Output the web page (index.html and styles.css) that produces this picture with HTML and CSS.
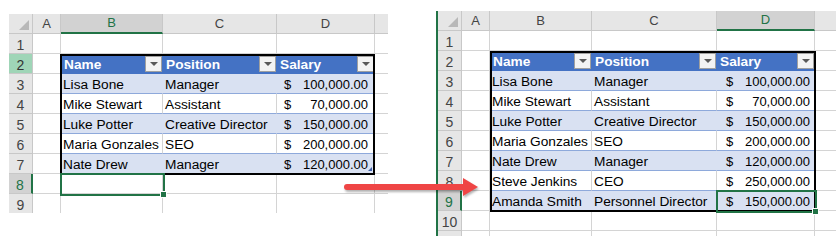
FILE: index.html
```html
<!DOCTYPE html>
<html lang="en">

<head>
    <meta charset="UTF-8">
    <meta name="viewport" content="width=device-width, initial-scale=1.0">
    <title>Add rows to a table</title>
    <link rel="stylesheet" href="styles.css">
</head>

<body>
    <div class="page">
        <!-- Sheet before the new rows -->
        <div class="sheet sheet-before">
            <div class="corner"></div>
            <div class="col-head">A</div>
            <div class="col-head sel">B</div>
            <div class="col-head">C</div>
            <div class="col-head">D</div>
            <div class="col-head"></div>

            <div class="row-head">1</div>
            <div class="cell"></div>
            <div class="cell"></div>
            <div class="cell"></div>
            <div class="cell"></div>
            <div class="cell"></div>

            <div class="row-head mark">2</div>
            <div class="cell"></div>
            <div class="cell"></div>

            <div class="row-head">3</div>
            <div class="cell"></div>
            <div class="cell"></div>

            <div class="row-head">4</div>
            <div class="cell"></div>
            <div class="cell"></div>

            <div class="row-head">5</div>
            <div class="cell"></div>
            <div class="cell"></div>

            <div class="row-head">6</div>
            <div class="cell"></div>
            <div class="cell"></div>

            <div class="row-head">7</div>
            <div class="cell"></div>
            <div class="cell"></div>

            <div class="row-head sel">8</div>
            <div class="cell"></div>
            <div class="cell active"></div>
            <div class="cell"></div>
            <div class="cell"></div>
            <div class="cell"></div>

            <div class="row-head">9</div>
            <div class="cell"></div>
            <div class="cell"></div>
            <div class="cell"></div>
            <div class="cell"></div>
            <div class="cell"></div>

            <div class="tbl">
                <div class="th"><span>Name</span><span class="drop"></span></div>
                <div class="th"><span>Position</span><span class="drop"></span></div>
                <div class="th"><span>Salary</span><span class="drop"></span></div>

                <div class="td band">Lisa Bone</div>
                <div class="td band">Manager</div>
                <div class="td band money"><span>$</span><span>100,000.00</span></div>

                <div class="td">Mike Stewart</div>
                <div class="td">Assistant</div>
                <div class="td money"><span>$</span><span>70,000.00</span></div>

                <div class="td band">Luke Potter</div>
                <div class="td band">Creative Director</div>
                <div class="td band money"><span>$</span><span>150,000.00</span></div>

                <div class="td">Maria Gonzales</div>
                <div class="td">SEO</div>
                <div class="td money"><span>$</span><span>200,000.00</span></div>

                <div class="td band">Nate Drew</div>
                <div class="td band">Manager</div>
                <div class="td band money resize"><span>$</span><span>120,000.00</span></div>
            </div>
        </div>

        <!-- Sheet after the new rows -->
        <div class="sheet sheet-after">
            <div class="corner"></div>
            <div class="col-head">A</div>
            <div class="col-head">B</div>
            <div class="col-head">C</div>
            <div class="col-head sel">D</div>
            <div class="col-head"></div>

            <div class="row-head">1</div>
            <div class="cell"></div>
            <div class="cell"></div>
            <div class="cell"></div>
            <div class="cell"></div>
            <div class="cell"></div>

            <div class="row-head">2</div>
            <div class="cell"></div>
            <div class="cell"></div>

            <div class="row-head">3</div>
            <div class="cell"></div>
            <div class="cell"></div>

            <div class="row-head">4</div>
            <div class="cell"></div>
            <div class="cell"></div>

            <div class="row-head">5</div>
            <div class="cell"></div>
            <div class="cell"></div>

            <div class="row-head">6</div>
            <div class="cell"></div>
            <div class="cell"></div>

            <div class="row-head">7</div>
            <div class="cell"></div>
            <div class="cell"></div>

            <div class="row-head">8</div>
            <div class="cell"></div>
            <div class="cell"></div>

            <div class="row-head sel">9</div>
            <div class="cell"></div>
            <div class="cell"></div>

            <div class="row-head">10</div>
            <div class="cell"></div>
            <div class="cell"></div>
            <div class="cell"></div>
            <div class="cell"></div>
            <div class="cell"></div>

            <!-- next row, only its top edge is in view -->
            <div class="row-head"></div>
            <div class="cell"></div>
            <div class="cell"></div>
            <div class="cell"></div>
            <div class="cell"></div>
            <div class="cell"></div>

            <div class="tbl">
                <div class="th"><span>Name</span><span class="drop"></span></div>
                <div class="th"><span>Position</span><span class="drop"></span></div>
                <div class="th"><span>Salary</span><span class="drop"></span></div>

                <div class="td band">Lisa Bone</div>
                <div class="td band">Manager</div>
                <div class="td band money"><span>$</span><span>100,000.00</span></div>

                <div class="td">Mike Stewart</div>
                <div class="td">Assistant</div>
                <div class="td money"><span>$</span><span>70,000.00</span></div>

                <div class="td band">Luke Potter</div>
                <div class="td band">Creative Director</div>
                <div class="td band money"><span>$</span><span>150,000.00</span></div>

                <div class="td">Maria Gonzales</div>
                <div class="td">SEO</div>
                <div class="td money"><span>$</span><span>200,000.00</span></div>

                <div class="td band">Nate Drew</div>
                <div class="td band">Manager</div>
                <div class="td band money"><span>$</span><span>120,000.00</span></div>

                <div class="td">Steve Jenkins</div>
                <div class="td">CEO</div>
                <div class="td money"><span>$</span><span>250,000.00</span></div>

                <div class="td band">Amanda Smith</div>
                <div class="td band">Personnel Director</div>
                <div class="td band money active"><span>$</span><span>150,000.00</span></div>
            </div>
        </div>

        <!-- Arrow between the two sheets -->
        <svg class="arrow" width="150" height="40" viewBox="0 0 150 40">
            <line x1="10" y1="17" x2="128" y2="17" stroke="#ef4545" stroke-width="6" stroke-linecap="round" />
            <polygon points="126,8 141,17 126,26" fill="#ef4545" />
        </svg>
    </div>
</body>

</html>
```

FILE: styles.css
```css
body {
    margin: 0;
    font-family: "Liberation Sans", Arial, sans-serif;
    font-size: 13.7px;
    color: #000;
    background-color: #fff;
}

.page {
    position: relative;
    display: flex;
    align-items: flex-start;
    width: 836px;
    height: 248px;
    padding-left: 9px;
    box-sizing: border-box;
    overflow: hidden;
}

/* Sheet grid */
.sheet {
    display: grid;
    grid-auto-rows: 20px;
    overflow: hidden;
    background-color: #fff;
    box-sizing: border-box;
}

.sheet-before {
    grid-template-columns: 24px 28px 102px 114px 98px 30px;
    width: 379px;
    height: 199px;
    margin-top: 14px;
}

.sheet-after {
    grid-template-columns: 24px 28px 102px 125px 98px 30px;
    width: 400px;
    height: 225px;
    margin-top: 11px;
    margin-left: 48px;
    border-left: 2px solid #217346;
}

.cell,
.corner,
.col-head,
.row-head,
.th,
.td {
    box-sizing: border-box;
    border-right: 1px solid #d4d4d4;
    border-bottom: 1px solid #d4d4d4;
    padding: 3px 0 0 2px;
    line-height: 16px;
    white-space: nowrap;
}

/* Headers */
.corner {
    position: relative;
    background-color: #e6e6e6;
    border-right-color: #c8c8c8;
    border-bottom-color: #c8c8c8;
}

.corner::after {
    content: '';
    position: absolute;
    right: 3px;
    bottom: 3px;
    border-style: solid;
    border-width: 0 0 10px 10px;
    border-color: transparent transparent #b8b8b8 transparent;
}

.col-head {
    background-color: #e6e6e6;
    border-right-color: #c8c8c8;
    border-bottom-color: #c8c8c8;
    padding: 0;
    font-size: 13px;
    line-height: 19px;
    text-align: center;
    color: #444;
}

.col-head.sel {
    background-color: #d2d2d2;
    color: #217346;
    border-bottom: 2px solid #217346;
    line-height: 18px;
}

.row-head {
    background-color: #e6e6e6;
    border-right-color: #c8c8c8;
    border-bottom-color: #c8c8c8;
    padding: 3px 0 0;
    font-size: 14px;
    text-align: center;
    color: #444;
}

.row-head.mark {
    background-color: #9fd5b7;
    color: #333;
}

.row-head.sel {
    background-color: #d2d2d2;
    color: #217346;
    border-right: 2px solid #217346;
}

/* Table */
.tbl {
    position: relative;
    display: grid;
    grid-auto-rows: 20px;
}

.sheet-before .tbl {
    grid-column: 3 / 6;
    grid-row: 3 / 9;
    grid-template-columns: 102px 114px 98px;
}

.sheet-after .tbl {
    grid-column: 3 / 6;
    grid-row: 3 / 11;
    grid-template-columns: 102px 125px 98px;
}

.tbl::after {
    content: '';
    position: absolute;
    top: 0;
    bottom: -1px;
    border: 2px solid #000;
    z-index: 1;
    pointer-events: none;
}

.sheet-before .tbl::after {
    left: -1px;
    right: 0;
}

.sheet-after .tbl::after {
    left: 0;
    right: -1px;
}

.th {
    display: flex;
    justify-content: space-between;
    align-items: flex-start;
    padding: 3px 0 0 3px;
    background-color: #4472c4;
    border-right-color: #4472c4;
    border-bottom-color: #4472c4;
    color: #fff;
    font-weight: bold;
}

.drop {
    position: relative;
    width: 17px;
    height: 16px;
    margin-top: -1px;
    box-sizing: border-box;
    background-color: #f3f3f3;
    border: 1px solid #a0a0a0;
}

.drop::after {
    content: '';
    position: absolute;
    left: 4px;
    top: 5px;
    border-left: 4px solid transparent;
    border-right: 4px solid transparent;
    border-top: 4px solid #595959;
}

.td {
    border-bottom-color: #8ea9db;
}

.td.band {
    background-color: #d9e1f2;
    border-right-color: #d9e1f2;
}

.money {
    display: flex;
    justify-content: space-between;
    font-size: 13px;
}

.sheet-before .money {
    padding-left: 7px;
    padding-right: 6px;
}

.sheet-after .money {
    padding-left: 9px;
    padding-right: 4px;
}

.resize {
    position: relative;
}

.resize::after {
    content: '';
    position: absolute;
    right: 2px;
    bottom: 2px;
    border-style: solid;
    border-width: 0 0 4px 4px;
    border-color: transparent transparent #3f5fa8 transparent;
}

/* Active cell with its fill handle */
.active {
    position: relative;
}

.active::before {
    content: '';
    position: absolute;
    left: -1px;
    top: -1px;
    right: -3px;
    bottom: -3px;
    border: 2px solid #217346;
    z-index: 2;
}

.active::after {
    content: '';
    position: absolute;
    right: -5px;
    bottom: -5px;
    width: 5px;
    height: 5px;
    background-color: #217346;
    border: 1px solid #fff;
    z-index: 3;
}

.arrow {
    position: absolute;
    left: 337px;
    top: 170px;
    z-index: 5;
    filter: drop-shadow(1px 2px 1px rgba(0, 0, 0, 0.3));
}
```
